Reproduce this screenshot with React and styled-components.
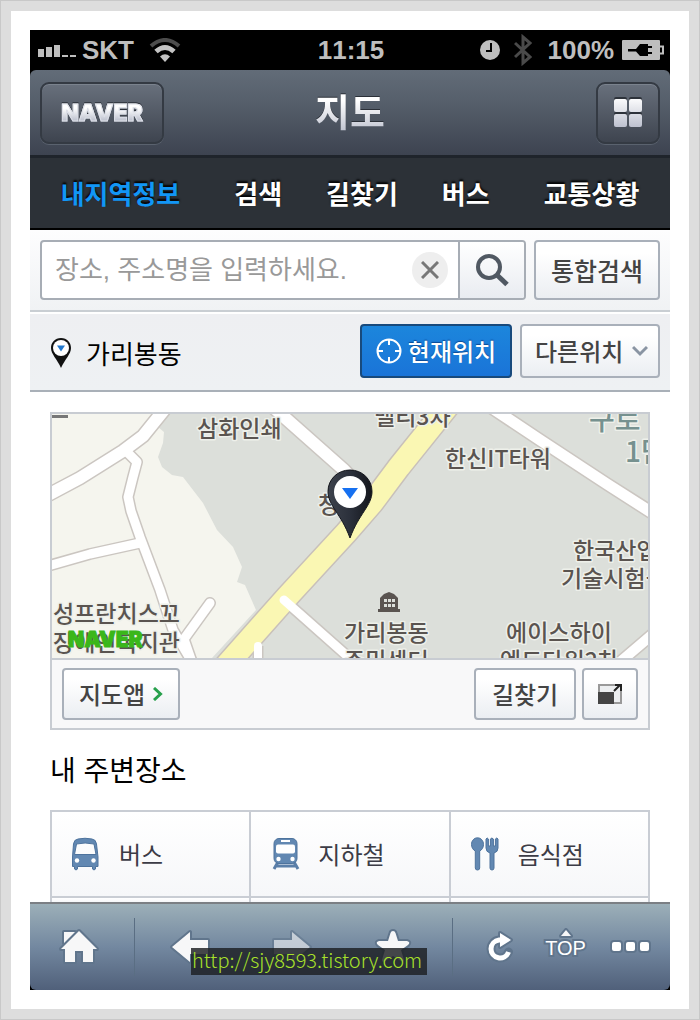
import React, { useState } from "react";
import styled, { createGlobalStyle, css } from "styled-components";

const GlobalStyle = createGlobalStyle`
  *, *::before, *::after { box-sizing: border-box; }
  body {
    margin: 0;
    background: #ddd;
    font-family: "Liberation Sans", "Noto Sans CJK KR", sans-serif;
  }
  button, input, select { font: inherit; color: inherit; margin: 0; }
  button { cursor: pointer; }
`;

const korean = css`
  font-family: "Noto Sans CJK KR", sans-serif;
`;

const Frame = styled.div`
  padding: 10px;
  border: 1px solid #c8c8c8;
  background: #ddd;
`;

const Paper = styled.div`
  padding: 19px;
  background: #fff;
`;

const Phone = styled.div`
  display: flex;
  flex-direction: column;
  background: #000;
  ${korean}
`;

/* Status bar */

const StatusBar = styled.div`
  display: grid;
  grid-template-columns: 1fr auto 1fr;
  align-items: center;
  height: 40px;
  padding: 0 6px 0 8px;
  color: #bebebe;
  font-family: "Liberation Sans", sans-serif;
  font-size: 26px;
  font-weight: 700;
  line-height: 40px;
  font-kerning: none;
`;

const StatusSide = styled.div`
  display: flex;
  align-items: center;
  justify-content: ${(p) => (p.$end ? "flex-end" : "flex-start")};
  gap: ${(p) => (p.$end ? "8px" : "6px")};
`;

const WifiIcon = styled.svg`
  margin-left: 9px;
`;

const BluetoothIcon = styled.svg`
  margin: 0 8px 0 6px;
`;

/* Title bar */

const TitleBar = styled.header`
  display: grid;
  grid-template-columns: 1fr auto 1fr;
  align-items: center;
  height: 88px;
  padding: 0 10px;
  border-bottom: 3px solid #1f242b;
  border-radius: 6px 6px 0 0;
  background: linear-gradient(#626c78, #555e6a 40%, #3d4350);
`;

const GlossyButton = styled.button`
  display: flex;
  align-items: center;
  justify-content: center;
  justify-self: ${(p) => (p.$end ? "end" : "start")};
  width: ${(p) => p.$width};
  height: 62px;
  padding: 0;
  border: 2px solid #343a43;
  border-radius: 9px;
  background: linear-gradient(#68707c, #3e444f);
  box-shadow: 0 1px 0 #5a626e, inset 0 1px 0 #7b838e;
`;

const silverText = css`
  color: transparent;
  background: linear-gradient(#ffffff 30%, #bfc3d0 80%);
  background-clip: text;
  -webkit-background-clip: text;
  filter: drop-shadow(0 -1px 0 #2b3038);
`;

const BrandText = styled.span`
  ${silverText}
  font-family: Inter, sans-serif;
  font-size: 23px;
  font-weight: 900;
  line-height: 24px;
  -webkit-text-stroke: 1px #dcdfe8;
`;

const Title = styled.h1`
  ${silverText}
  margin: 0;
  padding-bottom: 6px;
  font-size: 38px;
  font-weight: 700;
  line-height: 56px;
`;

/* Tabs */

const Tabs = styled.nav`
  display: flex;
  justify-content: center;
  height: 72px;
  border-bottom: 2px solid #000;
  background: #2c3137;
`;

const Tab = styled.a`
  padding: 0 ${(p) => (p.$wide ? "32px" : "22px")};
  color: ${(p) => (p.$active ? "#1296f5" : "#fff")};
  font-size: 26px;
  font-weight: 700;
  line-height: 70px;
  text-decoration: none;
  text-shadow: 0 -2px 2px #000;
  white-space: nowrap;
`;

/* Search */

const SearchBar = styled.form`
  display: flex;
  gap: 8px;
  height: 82px;
  padding: 10px;
  border-bottom: 2px solid #c9ced3;
  background: linear-gradient(#fdfdfe, #f0f2f4);
`;

const SearchField = styled.div`
  display: flex;
  flex: 1;
  align-items: stretch;
  height: 60px;
  min-width: 0;
  border: 2px solid #a7adb5;
  border-radius: 4px;
  background: #fff;
  overflow: hidden;
`;

const SearchInput = styled.input`
  flex: 1;
  min-width: 0;
  padding: 0 0 0 13px;
  border: 0;
  outline: 0;
  background: transparent;
  color: #333;
  font-family: "Liberation Sans", "Noto Sans CJK KR", sans-serif;
  font-size: 26px;
  line-height: 40px;
  &::placeholder { color: #999; opacity: 1; }
`;

const ClearButton = styled.button`
  display: flex;
  align-items: center;
  justify-content: center;
  align-self: center;
  width: 36px;
  height: 36px;
  margin-right: 10px;
  padding: 0;
  border: 0;
  border-radius: 50%;
  background: #eee;
`;

const SearchButton = styled.button`
  display: flex;
  align-items: center;
  justify-content: center;
  width: 66px;
  padding: 0;
  border: 0;
  border-left: 2px solid #a7adb5;
  background: linear-gradient(#fff, #e9ecf1);
`;

const raised = css`
  border: 2px solid #a9b0ba;
  border-radius: 4px;
  background: linear-gradient(#fff 20%, #ebeef2);
  color: #444;
  font-weight: 500;
`;

const LightButton = styled.button`
  ${raised}
  display: flex;
  align-items: center;
  justify-content: center;
  gap: 8px;
  width: ${(p) => p.$width};
  height: ${(p) => p.$height};
  padding: 0;
  font-size: ${(p) => p.$size || "24px"};
  line-height: 36px;
  white-space: nowrap;
`;

/* Location */

const LocationBar = styled.section`
  display: flex;
  align-items: flex-start;
  gap: 8px;
  height: 80px;
  padding: 10px 10px 0 20px;
  border-top: 2px solid #fff;
  border-bottom: 2px solid #a9b0b8;
  background: linear-gradient(#eeeff2, #eef1f3);
`;

const Place = styled.h2`
  display: flex;
  flex: 1;
  align-items: center;
  gap: 14px;
  height: 58px;
  margin: 0;
  color: #000;
  font-size: 26px;
  font-weight: 400;
  line-height: 38px;
`;

const LocateButton = styled.button`
  display: flex;
  align-items: center;
  justify-content: center;
  gap: 6px;
  width: 152px;
  height: 54px;
  padding: 0;
  border: 2px solid #184a7c;
  border-radius: 4px;
  background: linear-gradient(#1c86dc, #1a74d8);
  color: #fff;
  font-size: 24px;
  font-weight: 500;
  line-height: 36px;
  text-shadow: 0 -1px 1px #0c4a94;
`;

const SelectBox = styled.div`
  display: grid;
  align-items: center;
  width: 140px;
  height: 54px;
  & > * { grid-area: 1 / 1; }
`;

const Select = styled.select`
  ${raised}
  appearance: none;
  width: 100%;
  height: 54px;
  padding: 0 0 2px 13px;
  font-size: 24px;
`;

const SelectArrow = styled.svg`
  justify-self: end;
  margin-right: 12px;
  pointer-events: none;
`;

/* Page body */

const Content = styled.main`
  padding: 20px 20px 0;
  background: #fff;
`;

const MapCard = styled.section`
  border: 2px solid #c8ccd2;
  background: #f8f8f9;
`;

const MapDrawing = styled.svg`
  display: block;
  width: 100%;
  height: 244px;
  background: #dcdfda;
`;

const MapLabel = styled.text`
  ${korean}
  font-size: ${(p) => (p.$district ? "28px" : "23px")};
  font-weight: 500;
  fill: ${(p) => (p.$district ? "#76918f" : "#5a5450")};
  stroke: #eef0ea;
  stroke-width: 3px;
  stroke-linejoin: round;
  paint-order: stroke;
`;

const MapBrand = styled.text`
  font-family: Inter, sans-serif;
  font-size: 21px;
  font-weight: 900;
  fill: #3ab71a;
  stroke: #3ab71a;
  stroke-width: 1px;
`;

const MapFooter = styled.div`
  display: flex;
  gap: 6px;
  padding: 8px 10px;
  border-top: 2px solid #c8ccd2;
`;

const Spacer = styled.span`
  flex: 1;
`;

const Heading = styled.h2`
  margin: 0;
  padding: 22px 0 18px;
  color: #000;
  font-family: "Liberation Sans", "Noto Sans CJK KR", sans-serif;
  font-size: 28px;
  font-weight: 400;
  line-height: 40px;
`;

const PlaceGrid = styled.ul`
  display: grid;
  grid-template-columns: repeat(3, 1fr);
  gap: 2px;
  margin: 0;
  padding: 2px 2px 0;
  background: #c9cdd4;
  list-style: none;
`;

const PlaceCell = styled.li`
  min-height: 4px;
  background: linear-gradient(#fff, #f6f7f9);
`;

const PlaceLink = styled.a`
  display: flex;
  align-items: center;
  gap: 16px;
  height: 84px;
  padding-left: 19px;
  color: #3c3c46;
  font-size: 24px;
  line-height: 36px;
  text-decoration: none;
`;

/* Browser toolbar */

const Toolbar = styled.footer`
  position: relative;
  display: grid;
  grid-template-columns: 105fr 318fr 217fr;
  height: 88px;
  border-top: 2px solid #7b7f84;
  border-radius: 0 0 6px 6px;
  background: linear-gradient(#9cafb8, #7388a0 50%, #50607a);
`;

const ToolGroup = styled.div`
  display: flex;
  align-items: center;
  margin: 14px 0;
  padding: ${(p) => p.$padding || "0"};
  border-right: ${(p) => (p.$last ? "0" : "1px solid #5a6e83")};
`;

const ToolButton = styled.button`
  display: flex;
  flex: 1;
  flex-direction: column;
  align-items: center;
  justify-content: center;
  padding: ${(p) => (p.$raised ? "0 0 8px" : "0")};
  border: 0;
  background: none;
  color: #fff;
  font-family: "Liberation Sans", sans-serif;
  font-size: 20px;
  line-height: 20px;
`;

const ToolLabel = styled.span`
  -webkit-text-stroke: 4px #60758c;
  paint-order: stroke fill;
`;

const Watermark = styled.a`
  position: absolute;
  top: 44px;
  left: 25%;
  margin-left: 1px;
  padding: 0 5px 3px 1px;
  background: rgba(28, 30, 34, 0.82);
  color: #a8e22a;
  font-family: "Noto Sans CJK KR", sans-serif;
  font-size: 20px;
  font-weight: 300;
  line-height: 24px;
  text-decoration: none;
  white-space: nowrap;
`;

const Pin = () => (
  <svg width="22" height="32" viewBox="0 0 22 32" aria-hidden="true">
    <path d="M11 1C5 1 1 5.500 1 11c0 6 6 11 10 20 4-9 10-14 10-20C21 5.500 17 1 11 1z" fill="#111" />
    <circle cx="11" cy="11" r="8" fill="#fff" />
    <path d="M7 8.500h8l-4 6z" fill="#2277cc" />
  </svg>
);

const BusIcon = () => (
  <svg width="32" height="34" viewBox="1 0 32 34" aria-hidden="true">
    <path
      fillRule="evenodd"
      fill="#6288b2"
      stroke="#4e739d"
      strokeWidth="1"
      d="M8 2Q15 .5 22 2 26 2.500 26.500 7L28 20V29.500H25.500V32Q24 34 22.500 32V29.500H7.500V32Q6 34 4.500 32V29.500H2.500V20L3.500 7Q4 2.500 8 2zM6.500 7L4.500 17.500H26L24 7Q15 5 6.500 7z"
    />
    <circle cx="7" cy="23.500" r="2.200" fill="#fff" />
    <circle cx="23.500" cy="23.500" r="2.200" fill="#fff" />
  </svg>
);

const SubwayIcon = () => (
  <svg width="32" height="34" viewBox="1 0 32 34" aria-hidden="true">
    <path d="M9 25L5 32M25 25L29 32M7 29H27" stroke="#5b7fa9" strokeWidth="3" />
    <rect x="5" y="1.500" width="23" height="25" rx="5" fill="#6288b2" stroke="#4e739d" />
    <rect x="12" y="3" width="9" height="2" fill="#fff" />
    <rect x="7" y="7.500" width="19" height="9" rx="2" fill="#fff" />
    <circle cx="9.500" cy="22" r="2.200" fill="#fff" />
    <circle cx="23.500" cy="22" r="2.200" fill="#fff" />
  </svg>
);

const FoodIcon = () => (
  <svg width="32" height="34" viewBox="1 0 32 34" aria-hidden="true">
    <g fill="#6288b2" stroke="#4e739d">
      <path d="M8.500.8c3.500 0 6 3 6 6.700 0 3-1.600 5.500-3.800 6.500V31q0 2-2.200 2t-2.200-2V14C4.100 13 2.500 10.500 2.500 7.500 2.500 3.800 5 .8 8.500.8z" />
      <path d="M17 2q1.200-2 2.400 0v7h2V2q1.500-2 3 0v7h2V2q1.400-2 2.600 0v9q0 4-4 5v15q0 2-2 2t-2-2V16q-4-1-4-5z" />
    </g>
  </svg>
);

const ToolIcon = ({ d, width = 42, height = 38, opacity = 1 }) => (
  <svg width={width} height={height} viewBox={`0 0 ${width} ${height}`} opacity={opacity} aria-hidden="true">
    <path d={d} fill="#f7f7f8" stroke="#60758c" strokeWidth="4" strokeLinejoin="round" paintOrder="stroke" />
  </svg>
);

const ReloadIcon = () => (
  <svg width="30" height="38" viewBox="0 0 30 38" fill="none" aria-hidden="true">
    <g stroke="#60758c" strokeLinejoin="round">
      <path d="M14 12A9 9 0 1 0 23.500 24" strokeWidth="9" strokeLinecap="round" />
      <path d="M15 5L26 12 15 19z" strokeWidth="4" />
    </g>
    <path d="M16 12H14A9 9 0 1 0 23.500 24" stroke="#fff" strokeWidth="5" />
    <path d="M15 5L26 12 15 19z" fill="#fff" />
  </svg>
);

const MoreIcon = () => (
  <svg width="42" height="16" viewBox="0 0 42 16" fill="#fff" stroke="#60758c" strokeWidth="4" paintOrder="stroke" aria-hidden="true">
    <rect x="2" y="3" width="9" height="9" rx="2" />
    <rect x="16" y="3" width="9" height="9" rx="2" />
    <rect x="30" y="3" width="9" height="9" rx="2" />
  </svg>
);

const roads = [
  { d: "M-4 81L28 64 71 37 91 22 112-4", w: 12 },
  { d: "M73 36L85 48 81 63 76 83 79 97 88 123 108 176 121 216 140 248", w: 9 },
  { d: "M-4 152L38 140 88 129", w: 9 },
  { d: "M158 189L132 225 140 248", w: 9 },
  { d: "M222-6L292 56 312 78", w: 12 },
  { d: "M440-6L488 26 555 70 602 100", w: 11 },
  { d: "M568 248L602 219", w: 10 },
];

const feeders = [
  { d: "M232 186L302 248", w: 9 },
  { d: "M206 232V250", w: 8 },
];

const highway = "M396-8L347 53 320 89 294 119 235 183 172 254";

const labels = [
  { x: 145, y: 23, t: "삼화인쇄" },
  { x: 322, y: 11, t: "밸리3차" },
  { x: 393, y: 53, t: "한신IT타워" },
  { x: 521, y: 145, t: "한국산업" },
  { x: 509, y: 173, t: "기술시험원" },
  { x: 266, y: 99, t: "청" },
  { x: 292, y: 227, t: "가리봉동" },
  { x: 292, y: 255, t: "주민센터" },
  { x: 454, y: 227, t: "에이스하이" },
  { x: 448, y: 255, t: "엔드타워2차" },
  { x: 1, y: 208, t: "성프란치스꼬" },
  { x: 1, y: 237, t: "장애인복지관" },
];

const AreaMap = () => (
  <MapDrawing viewBox="0 0 596 244" preserveAspectRatio="xMidYMid slice" role="img" aria-label="가리봉동 지도">
    <path
      d="M0 0H108L106 13 112 18 111 29 106 43 110 53 120 61 131 63 151 89 165 116 181 133 190 153 185 168 193 171 204 196 160 244H0z"
      fill="#f5f5ee"
    />
    {roads.map((r) => (
      <path key={r.d} d={r.d} fill="none" stroke="#cbc6c1" strokeWidth={r.w + 3} strokeLinecap="round" strokeLinejoin="round" />
    ))}
    {roads.map((r) => (
      <path key={r.d} d={r.d} fill="none" stroke="#fff" strokeWidth={r.w} strokeLinecap="round" strokeLinejoin="round" />
    ))}
    <path d={highway} fill="none" stroke="#c8c0ba" strokeWidth="25" />
    {feeders.map((r) => (
      <path key={r.d} d={r.d} fill="none" stroke="#cbc6c1" strokeWidth={r.w + 3} />
    ))}
    <path d={highway} fill="none" stroke="#faf7b3" strokeWidth="22" />
    {feeders.map((r) => (
      <path key={r.d} d={r.d} fill="none" stroke="#fff" strokeWidth={r.w} strokeLinecap="round" />
    ))}
    <rect y="1" width="16" height="3" fill="#777" />
    {labels.map((l) => (
      <MapLabel key={l.t} x={l.x} y={l.y}>{l.t}</MapLabel>
    ))}
    <MapLabel x="537" y="16" $district>구로</MapLabel>
    <MapLabel x="573" y="48" $district>1단지</MapLabel>
    <MapBrand x="16" y="233">NAVER</MapBrand>
    <g fill="#5a5450">
      <path d="M326 197V195H328V184L332 180 337 178 342 180 346 184V195H348V198H326z" />
      <path d="M332 185H335V188H332zM336 185H339V188H336zM340 185H343V188H340zM332 190H335V193H332zM336 190H339V193H336zM340 190H343V193H340z" fill="#dcdfda" />
    </g>
    <path d="M298 56c-12.500 0-22 9.500-22 21.500 0 14 13 22 22 46.500 9-24.500 22-32.500 22-46.500C320 65.500 310.500 56 298 56z" fill="url(#pinFill)" stroke="#15171d" strokeWidth="1" />
    <circle cx="298" cy="78" r="16" fill="#fff" />
    <path d="M290 74H306L298 85z" fill="#1670f0" />
    <defs>
      <linearGradient id="pinFill" x1="0" x2="1">
        <stop offset="0" stopColor="#3d424c" />
        <stop offset=".5" stopColor="#2b303b" />
        <stop offset="1" stopColor="#14161c" />
      </linearGradient>
    </defs>
  </MapDrawing>
);

const tabs = ["내지역정보", "검색", "길찾기", "버스", "교통상황"];

const places = [
  { name: "버스", Icon: BusIcon },
  { name: "지하철", Icon: SubwayIcon },
  { name: "음식점", Icon: FoodIcon },
];

export default function App() {
  const [query, setQuery] = useState("");
  return (
    <Frame>
      <GlobalStyle />
      <Paper>
        <Phone>
          <StatusBar>
            <StatusSide>
              <svg width="38" height="14" viewBox="0 0 38 14" fill="#bebebe" aria-hidden="true">
                <path d="M0 6h6v8H0zM8 4h6v10H8zM16 2h6v12h-6zM24 12h6v2h-6zM32 12h6v2h-6z" />
              </svg>
              <span>SKT</span>
              <WifiIcon width="32" height="24" viewBox="0 0 32 24" fill="none" aria-hidden="true">
                <path d="M2 8Q16-4 30 8" stroke="#4c4c4c" strokeWidth="4" />
                <path d="M7 13.500Q16 5.500 25 13.500" stroke="#c4c4c4" strokeWidth="5" />
                <path d="M11 18.500Q16 14 21 18.500L16 24z" fill="#c4c4c4" />
              </WifiIcon>
            </StatusSide>
            <span>11:15</span>
            <StatusSide $end>
              <svg width="20" height="20" viewBox="0 0 20 20" aria-hidden="true">
                <circle cx="10" cy="10" r="10" fill="#bebebe" />
                <path d="M11 3V11H6" fill="none" stroke="#000" strokeWidth="2" />
              </svg>
              <BluetoothIcon width="18" height="32" viewBox="0 0 18 32" fill="none" aria-hidden="true">
                <path d="M1 9L16 23 9 29V3L16 9 1 23" stroke="#4a4a4a" strokeWidth="3" />
              </BluetoothIcon>
              <span>100%</span>
              <svg width="42" height="20" viewBox="0 0 42 20" aria-hidden="true">
                <rect width="38" height="20" rx="1" fill="#bebebe" />
                <path d="M38 6.500h3v7h-3" fill="none" stroke="#bebebe" strokeWidth="2" />
                <path d="M6 9H14L18 4H26V6H30V8H26V12H30V14H26V16H18L14 11.500H6z" fill="#000" />
              </svg>
            </StatusSide>
          </StatusBar>

          <TitleBar>
            <GlossyButton $width="124px" type="button">
              <BrandText>NAVER</BrandText>
            </GlossyButton>
            <Title>지도</Title>
            <GlossyButton $width="64px" $end type="button" aria-label="메뉴">
              <svg width="30" height="32" viewBox="0 0 30 32" aria-hidden="true">
                <defs>
                  <linearGradient id="tile" gradientUnits="userSpaceOnUse" x1="0" x2="0" y1="0" y2="32">
                    <stop offset="0" stopColor="#fff" />
                    <stop offset="1" stopColor="#b9bdcc" />
                  </linearGradient>
                </defs>
                <g fill="#2d323a">
                  <rect x="1" y="0" width="13" height="13" rx="2" />
                  <rect x="16" y="0" width="13" height="13" rx="2" />
                  <rect x="1" y="15" width="13" height="13" rx="2" />
                  <rect x="16" y="15" width="13" height="13" rx="2" />
                </g>
                <g fill="url(#tile)">
                  <rect x="1" y="2" width="13" height="13" rx="2" />
                  <rect x="16" y="2" width="13" height="13" rx="2" />
                  <rect x="1" y="17" width="13" height="13" rx="2" />
                  <rect x="16" y="17" width="13" height="13" rx="2" />
                </g>
              </svg>
            </GlossyButton>
          </TitleBar>

          <Tabs>
            {tabs.map((t, i) => (
              <Tab key={t} href="#" $active={i === 0} $wide={i === 0 || i === tabs.length - 1}>{t}</Tab>
            ))}
          </Tabs>

          <SearchBar onSubmit={(e) => e.preventDefault()}>
            <SearchField>
              <SearchInput
                aria-label="장소, 주소명"
                placeholder="장소, 주소명을 입력하세요."
                value={query}
                onChange={(e) => setQuery(e.target.value)}
              />
              <ClearButton type="button" aria-label="지우기" onClick={() => setQuery("")}>
                <svg width="18" height="18" viewBox="0 0 18 18" stroke="#777" strokeWidth="3" aria-hidden="true">
                  <path d="M1 1L17 17M17 1L1 17" />
                </svg>
              </ClearButton>
              <SearchButton type="submit" aria-label="검색">
                <svg width="34" height="34" viewBox="0 0 34 34" fill="none" stroke="#505862" aria-hidden="true">
                  <circle cx="14" cy="14" r="11" strokeWidth="4" />
                  <path d="M21.500 21.500L32 31.500" strokeWidth="5" />
                </svg>
              </SearchButton>
            </SearchField>
            <LightButton type="button" $width="126px" $height="60px" $size="25px">통합검색</LightButton>
          </SearchBar>

          <LocationBar>
            <Place><Pin />가리봉동</Place>
            <LocateButton type="button">
              <svg width="26" height="26" viewBox="0 0 26 26" fill="none" stroke="#fff" strokeWidth="2" aria-hidden="true">
                <circle cx="13" cy="13" r="11.500" />
                <path d="M13 1V7M13 19V25M1 13H7M19 13H25" />
              </svg>
              현재위치
            </LocateButton>
            <SelectBox>
              <Select aria-label="다른위치"><option>다른위치</option></Select>
              <SelectArrow width="16" height="12" viewBox="0 0 16 12" fill="none" stroke="#8a95a3" strokeWidth="3" aria-hidden="true">
                <path d="M1 2L8 9 15 2" />
              </SelectArrow>
            </SelectBox>
          </LocationBar>

          <Content>
            <MapCard>
              <AreaMap />
              <MapFooter>
                <LightButton type="button" $width="118px" $height="52px">
                  지도앱
                  <svg width="10" height="14" viewBox="0 0 10 14" fill="none" stroke="#27a04c" strokeWidth="3" aria-hidden="true">
                    <path d="M1 1L7.500 7 1 13" />
                  </svg>
                </LightButton>
                <Spacer />
                <LightButton type="button" $width="102px" $height="52px">길찾기</LightButton>
                <LightButton type="button" $width="56px" $height="52px" aria-label="크게 보기">
                  <svg width="24" height="20" viewBox="0 0 24 20" fill="none" aria-hidden="true">
                    <rect x="1" y="1" width="22" height="18" fill="#eceef0" stroke="#999" strokeWidth="2" />
                    <rect x="0" y="8" width="16" height="12" fill="#444" />
                    <path d="M16 7L22 1M17 1H23V7" stroke="#222" strokeWidth="2" />
                  </svg>
                </LightButton>
              </MapFooter>
            </MapCard>

            <Heading>내 주변장소</Heading>
            <PlaceGrid>
              {places.map(({ name, Icon }) => (
                <PlaceCell key={name}>
                  <PlaceLink href="#"><Icon />{name}</PlaceLink>
                </PlaceCell>
              ))}
              <PlaceCell />
              <PlaceCell />
              <PlaceCell />
            </PlaceGrid>
          </Content>

          <Toolbar>
            <ToolGroup $padding="0 7px 0 0">
              <ToolButton type="button" aria-label="홈">
                <ToolIcon d="M6 4H17L11 10 6 15zM21 3L39 21H35V34H25V23H17V34H7V21H3z" />
              </ToolButton>
            </ToolGroup>
            <ToolGroup $padding="0 8px 0 4px">
              <ToolButton type="button" aria-label="뒤로">
                <ToolIcon d="M3 19L21 4V12H39V26H21V34z" />
              </ToolButton>
              <ToolButton type="button" aria-label="앞으로">
                <ToolIcon d="M39 19L21 4V12H3V26H21V34z" opacity={0.6} />
              </ToolButton>
              <ToolButton type="button" aria-label="즐겨찾기">
                <ToolIcon d="M21 3Q23 3 23.500 5L26 13H35Q39 14 36 17L29 22 32 32Q32 35 29 33L21 28 13 33Q10 35 10 32L13 22 6 17Q3 14 7 13H16L18.500 5Q19 3 21 3z" />
              </ToolButton>
            </ToolGroup>
            <ToolGroup $last $padding="0 6px 0 14px">
              <ToolButton type="button" aria-label="새로고침">
                <ReloadIcon />
              </ToolButton>
              <ToolButton type="button" $raised>
                <ToolIcon width={14} height={10} d="M7 2L12 8H2z" />
                <ToolLabel>TOP</ToolLabel>
              </ToolButton>
              <ToolButton type="button" aria-label="더보기">
                <MoreIcon />
              </ToolButton>
            </ToolGroup>
            <Watermark href="#">http://sjy8593.tistory.com</Watermark>
          </Toolbar>
        </Phone>
      </Paper>
    </Frame>
  );
}
